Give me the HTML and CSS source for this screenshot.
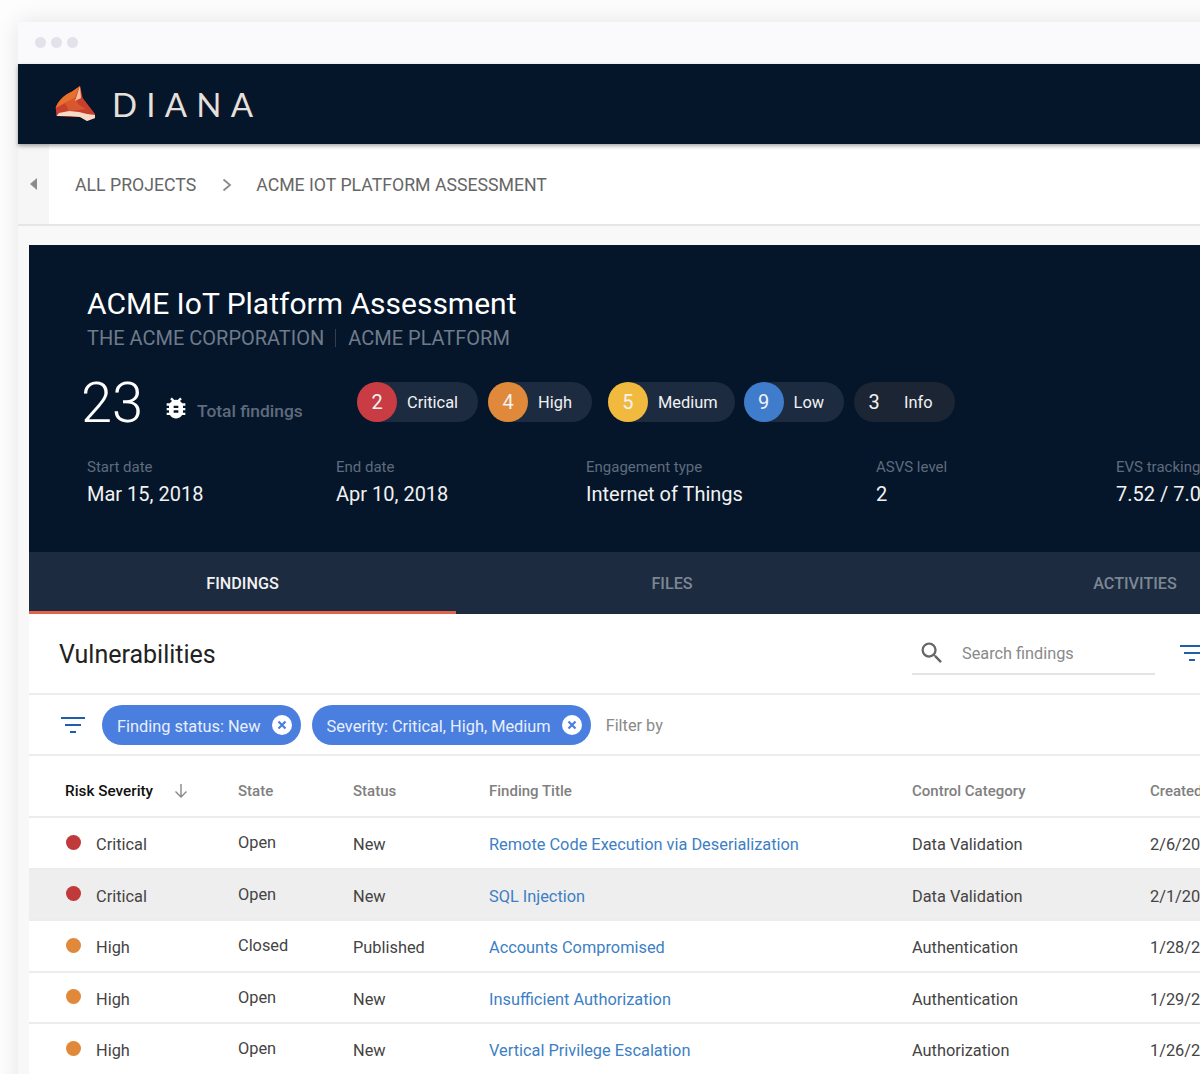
FILE: index.html
```html
<!DOCTYPE html>
<html lang="en">
<head>
    <meta charset="UTF-8">
    <title>Diana - ACME IoT Platform Assessment</title>
    <link rel="stylesheet" href="styles.css">
</head>
<body>
    <div class="window">
        <div class="window-bar">
            <span class="dot"></span><span class="dot"></span><span class="dot"></span>
        </div>

        <header class="topbar">
            <svg class="logo" viewBox="0 0 42 36" width="42" height="36" aria-hidden="true">
                <path d="M25 0 27.7 12 40 28v4l-8 3-7-4-10 0-13.500-1L.7 22C2 17 8 9 16.700 5.700Z" fill="#c8402c"/>
                <path d="M.7 22C2 17 8 9 16.700 5.700L25 0l-5 12-10 5Z" fill="#e8702f"/>
                <polygon points="10,17 20,12 24,19 31,23 14,25" fill="#d9572e"/>
                <polygon points="25,0 26,12 20,15" fill="#f4c0a0"/>
                <polygon points="1.500,30 4,27 14,25 24,26 32,28 40,29 40,32 32,35 25,31 15,30" fill="#f6dcc8"/>
            </svg>
            <span class="brand">DIANA</span>
        </header>

        <nav class="crumbs">
            <div class="crumbs-back"><span class="back-arrow"></span></div>
            <span class="crumb">ALL PROJECTS</span>
            <svg class="crumb-sep" viewBox="0 0 10 14" width="10" height="14"><path d="M1.500 1.500 8 7l-6.500 5.500" fill="none" stroke="#8a8a8a" stroke-width="1.800"/></svg>
            <span class="crumb">ACME IOT PLATFORM ASSESSMENT</span>
        </nav>

        <main class="card">
            <section class="hero">
                <h1>ACME IoT Platform Assessment</h1>
                <p class="hero-sub">THE ACME CORPORATION <i></i> ACME PLATFORM</p>

                <div class="summary">
                    <span class="total">23</span>
                    <svg class="bug" viewBox="0 0 24 24" width="28" height="28"><path fill="#fff" d="M20 8h-2.81a5.985 5.985 0 0 0-1.82-1.96L17 4.41 15.59 3l-2.17 2.17a6 6 0 0 0-2.83 0L8.41 3 7 4.41l1.62 1.63C7.88 6.55 7.26 7.22 6.81 8H4v2h2.09c-.05.33-.09.66-.09 1v1H4v2h2v1c0 .34.04.67.09 1H4v2h2.81c1.04 1.79 2.97 3 5.19 3s4.15-1.21 5.19-3H20v-2h-2.09c.05-.33.09-.66.09-1v-1h2v-2h-2v-1c0-.34-.04-.67-.09-1H20V8zm-6 8h-4v-2h4v2zm0-4h-4v-2h4v2z"/></svg>
                    <span class="total-label">Total findings</span>
                    <div class="pills">
                        <div class="pill"><b class="critical">2</b>Critical</div>
                        <div class="pill"><b class="high">4</b>High</div>
                        <div class="pill pill-medium"><b class="medium">5</b>Medium</div>
                        <div class="pill"><b class="low">9</b>Low</div>
                        <div class="pill pill-info"><b class="info">3</b>Info</div>
                    </div>
                </div>

                <div class="meta">
                    <div><label>Start date</label><span>Mar 15, 2018</span></div>
                    <div><label>End date</label><span>Apr 10, 2018</span></div>
                    <div><label>Engagement type</label><span>Internet of Things</span></div>
                    <div><label>ASVS level</label><span>2</span></div>
                    <div><label>EVS tracking</label><span>7.52 / 7.0</span></div>
                </div>
            </section>

            <div class="tabs">
                <a class="tab active">FINDINGS</a>
                <a class="tab">FILES</a>
                <a class="tab">ACTIVITIES</a>
            </div>

            <div class="toolbar">
                <h2>Vulnerabilities</h2>
                <div class="search">
                    <svg viewBox="0 0 24 24" width="28" height="28"><path fill="#666" d="M15.5 14h-.79l-.28-.27A6.47 6.47 0 0 0 16 9.5 6.5 6.5 0 1 0 9.5 16c1.61 0 3.09-.59 4.23-1.57l.27.28v.79l5 4.99L20.49 19l-4.99-5zm-6 0C7.01 14 5 11.99 5 9.5S7.01 5 9.5 5 14 7.01 14 9.5 11.99 14 9.5 14z"/></svg>
                    <span>Search findings</span>
                </div>
                <svg class="filter-icon" viewBox="0 0 24 16" width="24" height="16"><path fill="#1d5fa8" d="M0 0h24v2H0zM4 7h16v2H4zM9 14h6v2H9z"/></svg>
            </div>

            <div class="filters">
                <svg class="filter-icon" viewBox="0 0 24 16" width="24" height="16"><path fill="#1d5fa8" d="M0 0h24v2H0zM4 7h16v2H4zM9 14h6v2H9z"/></svg>
                <div class="chip"><span>Finding status: New</span>
                    <svg viewBox="0 0 22 22" width="22" height="22"><circle cx="11" cy="11" r="10" fill="#fff"/><path d="M7.500 7.500l7 7M14.500 7.500l-7 7" stroke="#4a7fe0" stroke-width="2.200"/></svg>
                </div>
                <div class="chip"><span>Severity: Critical, High, Medium</span>
                    <svg viewBox="0 0 22 22" width="22" height="22"><circle cx="11" cy="11" r="10" fill="#fff"/><path d="M7.500 7.500l7 7M14.500 7.500l-7 7" stroke="#4a7fe0" stroke-width="2.200"/></svg>
                </div>
                <span class="filter-by">Filter by</span>
            </div>

            <div class="row row-head">
                <div class="sorted">Risk Severity
                    <svg viewBox="0 0 16 16" width="16" height="16"><path d="M8 1v13M2.500 8.500 8 14l5.500-5.500" fill="none" stroke="#888" stroke-width="1.400"/></svg>
                </div>
                <div>State</div>
                <div>Status</div>
                <div>Finding Title</div>
                <div>Control Category</div>
                <div>Created</div>
            </div>

            <div class="row">
                <div class="severity"><i class="critical"></i>Critical</div>
                <div class="state">Open</div>
                <div>New</div>
                <div class="title">Remote Code Execution via Deserialization</div>
                <div>Data Validation</div>
                <div>2/6/2018</div>
            </div>
            <div class="row row-hover">
                <div class="severity"><i class="critical"></i>Critical</div>
                <div class="state">Open</div>
                <div>New</div>
                <div class="title">SQL Injection</div>
                <div>Data Validation</div>
                <div>2/1/2018</div>
            </div>
            <div class="row">
                <div class="severity"><i class="high"></i>High</div>
                <div class="state">Closed</div>
                <div>Published</div>
                <div class="title">Accounts Compromised</div>
                <div>Authentication</div>
                <div>1/28/2018</div>
            </div>
            <div class="row">
                <div class="severity"><i class="high"></i>High</div>
                <div class="state">Open</div>
                <div>New</div>
                <div class="title">Insufficient Authorization</div>
                <div>Authentication</div>
                <div>1/29/2018</div>
            </div>
            <div class="row">
                <div class="severity"><i class="high"></i>High</div>
                <div class="state">Open</div>
                <div>New</div>
                <div class="title">Vertical Privilege Escalation</div>
                <div>Authorization</div>
                <div>1/26/2018</div>
            </div>
        </main>
    </div>
</body>
</html>
```
FILE: styles.css
```css
* {
    margin: 0;
    padding: 0;
    box-sizing: border-box;
}

html, body {
    height: 1074px;
    overflow: hidden;
}

body {
    font-family: Roboto, "Liberation Sans", sans-serif;
    background-color: #fdfdfd;
    color: #333;
    padding: 22px 0 0 18px;
}

.window {
    width: 1300px;
    height: 1200px;
    background-color: #f8f8f8;
    box-shadow: 0 0 22px rgba(0, 0, 0, 0.1);
}

.window-bar {
    height: 42px;
    background-color: #fafafc;
    display: flex;
    align-items: center;
    gap: 5px;
    padding: 0 0 2px 17px;
}

.dot {
    width: 11px;
    height: 11px;
    border-radius: 50%;
    background-color: #e2e2ea;
}

.topbar {
    height: 80px;
    background-color: #05162b;
    display: flex;
    align-items: center;
    padding-left: 37px;
    box-shadow: 0 2px 4px rgba(0, 0, 0, 0.35);
    position: relative;
}

.brand {
    font-family: Lato, sans-serif;
    font-size: 33px;
    font-weight: 400;
    color: #e6dfda;
    letter-spacing: 9.2px;
    margin: 0 0 1px 15px;
}

.crumbs {
    height: 82px;
    background-color: #fff;
    display: flex;
    align-items: center;
    border-bottom: 2px solid #e6e6e6;
}

.crumbs-back {
    width: 31px;
    height: 100%;
    background-color: #f6f6f6;
    display: flex;
    align-items: center;
    justify-content: center;
    margin-right: 26px;
}

.back-arrow {
    border-style: solid;
    border-width: 6px 7px 6px 0;
    border-color: transparent #8d8d8d transparent transparent;
}

.crumb {
    font-size: 17.7px;
    color: #666;
    margin-top: 2px;
}

.crumb-sep {
    margin: 2px 24px 0 26px;
}

.card {
    margin: 19px 0 0 11px;
    background-color: #fff;
}

.hero {
    height: 307px;
    background-color: #05162b;
    padding: 40px 0 0 58px;
    color: #fff;
}

.hero h1 {
    font-size: 30px;
    font-weight: 400;
    line-height: 38px;
    color: #fff;
}

.hero-sub {
    font-size: 20px;
    line-height: 28px;
    color: #6f7b8a;
    margin-top: 1px;
    display: flex;
    align-items: center;
}

.hero-sub i {
    width: 1px;
    height: 18px;
    background-color: #333f50;
    margin: 0 12px 0 11px;
}

.summary {
    display: flex;
    align-items: center;
    margin-top: 22px;
    margin-left: -6px;
    height: 58px;
}

.total {
    font-size: 56px;
    font-weight: 300;
    color: #fff;
    width: 81px;
}

.bug {
    margin-top: 10px;
}

.total-label {
    font-size: 17.4px;
    font-weight: 500;
    color: #5f6b7c;
    margin: 16px 0 0 7px;
    width: 160px;
}

.pills {
    display: flex;
    gap: 10px;
    margin-top: -2px;
}

.pill {
    height: 40px;
    border-radius: 20px;
    background-color: #1c2b40;
    display: flex;
    align-items: center;
    font-size: 16.4px;
    color: #f2f2f2;
    padding-right: 20px;
}

.pill b {
    width: 40px;
    height: 40px;
    border-radius: 50%;
    display: flex;
    align-items: center;
    justify-content: center;
    font-size: 20px;
    font-weight: 400;
    margin-right: 10px;
}

.pill-medium {
    margin: 0 -1px 0 6px;
    padding-right: 17px;
}

.pill-info {
    background-color: #1c2533;
    padding-right: 22px;
}

.pill b.critical { background-color: #c93c43; }
.pill b.high { background-color: #e0893a; }
.pill b.medium { background-color: #f2b93f; }
.pill b.low { background-color: #3f7ccb; }
.pill b.info { background-color: transparent; }

.meta {
    display: grid;
    grid-template-columns: 249px 250px 290px 240px 200px;
    margin-top: 25px;
}

.meta label {
    display: block;
    font-size: 15px;
    line-height: 20px;
    color: #5f6b7c;
}

.meta span {
    display: block;
    font-size: 20px;
    line-height: 28px;
    margin-top: 3px;
    color: #f2f2f2;
}

.tabs {
    height: 62px;
    background-color: #1c2b40;
    display: grid;
    grid-template-columns: 427px 432px 494px;
}

.tab {
    font-size: 16.2px;
    font-weight: 500;
    color: #7d8794;
    display: flex;
    align-items: center;
    justify-content: center;
}

.tab.active {
    color: #f2f2f2;
    border-top: 3px solid transparent;
    border-bottom: 3px solid #e0644a;
}

.toolbar {
    height: 81px;
    display: flex;
    align-items: center;
    padding-left: 30px;
    border-bottom: 2px solid #ececec;
}

.toolbar h2 {
    font-size: 25px;
    font-weight: 400;
    color: #222;
    width: 853px;
    margin-top: 2px;
}

.search {
    width: 243px;
    height: 42px;
    margin-top: 1px;
    border-bottom: 2px solid #e4e4e4;
    display: flex;
    align-items: center;
    gap: 16px;
    padding-left: 6px;
    font-size: 16.3px;
    color: #8a8a8a;
}

.toolbar .filter-icon {
    margin: 0 0 2px 25px;
}

.filters {
    height: 61px;
    display: flex;
    align-items: center;
    padding-left: 32px;
    border-bottom: 2px solid #ececec;
}

.filters .filter-icon {
    margin-right: 17px;
}

.chip {
    height: 40px;
    border-radius: 20px;
    background-color: #4a7fe0;
    color: #e8effb;
    font-size: 16.35px;
    display: flex;
    align-items: center;
    gap: 10px;
    padding: 0 8px 0 15px;
    margin-right: 11px;
}

.chip span {
    margin-top: 3px;
}

.filter-by {
    font-size: 16.3px;
    color: #8a8a8a;
    margin: 2px 0 0 4px;
}

.row {
    display: grid;
    grid-template-columns: 173px 115px 136px 423px 238px 200px;
    align-items: center;
    height: 51.5px;
    padding: 4px 0 0 36px;
    border-bottom: 2px solid #ececec;
    font-size: 16.35px;
    color: #444;
}

.row-head {
    height: 62px;
    padding-top: 10px;
    font-size: 15px;
    font-weight: 500;
    color: #808080;
}

.sorted {
    color: #111;
    font-size: 15.3px;
    display: flex;
    align-items: center;
    gap: 20px;
}

.row-hover {
    background-color: #eeeeee;
}

.severity {
    display: flex;
    align-items: center;
    gap: 15px;
}

.severity i {
    width: 15px;
    height: 15px;
    border-radius: 50%;
    margin: 0 0 5px 1px;
}

.severity i.critical { background-color: #c0393b; }
.severity i.high { background-color: #e0893a; }

.state {
    margin-bottom: 4px;
}

.title {
    color: #3d7fc4;
}
```
